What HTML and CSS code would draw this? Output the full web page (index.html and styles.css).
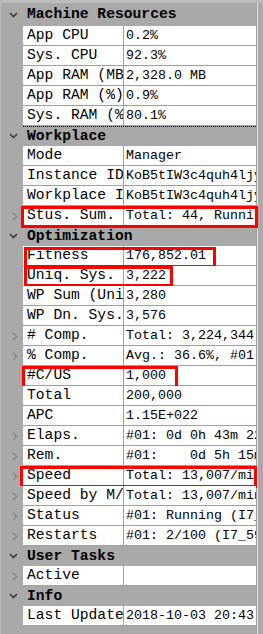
FILE: index.html
```html
<!DOCTYPE html>
<html>
<head>
<meta charset="utf-8">
<link rel="stylesheet" href="styles.css">
</head>
<body>
<div class="frame">
  <div class="tree">
    <div class="ghead first">
      <span class="tw"><svg class="chev-down" width="9" height="6" viewBox="0 0 9 6"><polyline points="1,1 4.5,4.5 8,1"/></svg></span>
      <span class="gtitle">Machine Resources</span>
    </div>
    <div class="row"><span class="tw"></span><span class="k">App CPU</span><span class="v">0.2%</span></div>
    <div class="row"><span class="tw"></span><span class="k">Sys. CPU</span><span class="v">92.3%</span></div>
    <div class="row"><span class="tw"></span><span class="k">App RAM (MB)</span><span class="v">2,328.0 MB</span></div>
    <div class="row"><span class="tw"></span><span class="k">App RAM (%)</span><span class="v">0.9%</span></div>
    <div class="row"><span class="tw"></span><span class="k">Sys. RAM (%)</span><span class="v">80.1%</span></div>

    <div class="ghead focus">
      <span class="tw"><svg class="chev-down" width="9" height="6" viewBox="0 0 9 6"><polyline points="1,1 4.5,4.5 8,1"/></svg></span>
      <span class="gtitle">Workplace</span>
    </div>
    <div class="row"><span class="tw"></span><span class="k">Mode</span><span class="v">Manager</span></div>
    <div class="row"><span class="tw"></span><span class="k">Instance ID</span><span class="v">KoB5tIW3c4quh4ljyQ</span></div>
    <div class="row"><span class="tw"></span><span class="k">Workplace ID</span><span class="v">KoB5tIW3c4quh4ljyQ</span></div>
    <div class="row"><span class="tw"><svg class="chev-right" width="6" height="9" viewBox="0 0 6 9"><polyline points="1,1 4.5,4.5 1,8"/></svg></span><span class="k">Stus. Sum.</span><span class="v">Total: 44, Running: 1</span><i class="box box-stus"></i></div>

    <div class="ghead">
      <span class="tw"><svg class="chev-down" width="9" height="6" viewBox="0 0 9 6"><polyline points="1,1 4.5,4.5 8,1"/></svg></span>
      <span class="gtitle">Optimization</span>
    </div>
    <div class="row"><span class="tw"></span><span class="k">Fitness</span><span class="v">176,852.01</span><i class="box box-fit"></i></div>
    <div class="row"><span class="tw"></span><span class="k">Uniq. Sys.</span><span class="v">3,222</span><i class="box box-uniq"></i></div>
    <div class="row"><span class="tw"></span><span class="k">WP Sum (Uniq.)</span><span class="v">3,280</span></div>
    <div class="row"><span class="tw"></span><span class="k">WP Dn. Sys.</span><span class="v">3,576</span></div>
    <div class="row"><span class="tw"><svg class="chev-right" width="6" height="9" viewBox="0 0 6 9"><polyline points="1,1 4.5,4.5 1,8"/></svg></span><span class="k"># Comp.</span><span class="v">Total: 3,224,344, #01</span></div>
    <div class="row"><span class="tw"><svg class="chev-right" width="6" height="9" viewBox="0 0 6 9"><polyline points="1,1 4.5,4.5 1,8"/></svg></span><span class="k">% Comp.</span><span class="v">Avg.: 36.6%, #01: 36</span></div>
    <div class="row"><span class="tw"></span><span class="k">#C/US</span><span class="v">1,000</span><i class="box box-cus"></i></div>
    <div class="row"><span class="tw"></span><span class="k">Total</span><span class="v">200,000</span></div>
    <div class="row"><span class="tw"></span><span class="k">APC</span><span class="v">1.15E+022</span></div>
    <div class="row"><span class="tw"><svg class="chev-right" width="6" height="9" viewBox="0 0 6 9"><polyline points="1,1 4.5,4.5 1,8"/></svg></span><span class="k">Elaps.</span><span class="v">#01: 0d 0h 43m 22s</span></div>
    <div class="row"><span class="tw"><svg class="chev-right" width="6" height="9" viewBox="0 0 6 9"><polyline points="1,1 4.5,4.5 1,8"/></svg></span><span class="k">Rem.</span><span class="v">#01:    0d 5h 15m</span></div>
    <div class="row"><span class="tw"><svg class="chev-right" width="6" height="9" viewBox="0 0 6 9"><polyline points="1,1 4.5,4.5 1,8"/></svg></span><span class="k">Speed</span><span class="v">Total: 13,007/min</span><i class="box box-speed"></i></div>
    <div class="row"><span class="tw"><svg class="chev-right" width="6" height="9" viewBox="0 0 6 9"><polyline points="1,1 4.5,4.5 1,8"/></svg></span><span class="k">Speed by M/C</span><span class="v">Total: 13,007/min</span></div>
    <div class="row"><span class="tw"><svg class="chev-right" width="6" height="9" viewBox="0 0 6 9"><polyline points="1,1 4.5,4.5 1,8"/></svg></span><span class="k">Status</span><span class="v">#01: Running (I7_5960X)</span></div>
    <div class="row"><span class="tw"><svg class="chev-right" width="6" height="9" viewBox="0 0 6 9"><polyline points="1,1 4.5,4.5 1,8"/></svg></span><span class="k">Restarts</span><span class="v">#01: 2/100 (I7_5960X)</span></div>

    <div class="ghead">
      <span class="tw"><svg class="chev-down" width="9" height="6" viewBox="0 0 9 6"><polyline points="1,1 4.5,4.5 8,1"/></svg></span>
      <span class="gtitle">User Tasks</span>
    </div>
    <div class="row"><span class="tw"><svg class="chev-right" width="6" height="9" viewBox="0 0 6 9"><polyline points="1,1 4.5,4.5 1,8"/></svg></span><span class="k">Active</span><span class="v"></span></div>

    <div class="ghead">
      <span class="tw"><svg class="chev-down" width="9" height="6" viewBox="0 0 9 6"><polyline points="1,1 4.5,4.5 8,1"/></svg></span>
      <span class="gtitle">Info</span>
    </div>
    <div class="row"><span class="tw"></span><span class="k">Last Update</span><span class="v">2018-10-03 20:43:51</span></div>
  </div>
  <div class="edge"></div>
</div>
</body>
</html>
```
FILE: styles.css
```css
html, body {
  margin: 0;
  padding: 0;
}
body {
  width: 263px;
  height: 634px;
  background: #f0f0f0;
  overflow: hidden;
}
.frame {
  display: flex;
  height: 634px;
  background: #a9a9a9;
  border-top: 3px solid #bcbcbc;
  border-left: 1px solid #bcbcbc;
  box-sizing: border-box;
}
.tree {
  width: 255px;
  display: flex;
  flex-direction: column;
  border-right: 1px solid #9a9a9a;
}
.edge {
  width: 6px;
  border-left: 1px solid #e8e8e8;
  background: #a9a9a9;
}
.ghead, .row {
  display: flex;
  height: 20px;
  flex: none;
}
.ghead.first {
  height: 23px;
}
.tw {
  width: 22px;
  flex: none;
  display: flex;
  align-items: center;
  justify-content: center;
  background: #a9a9a9;
}
.chev-down polyline {
  fill: none;
  stroke: #3c3c3c;
  stroke-width: 1.6;
}
.chev-right polyline {
  fill: none;
  stroke: #8a8a8a;
  stroke-width: 1.5;
}
.chev-down { margin-left: 3px; }
.chev-right { margin-left: 5px; }
.gtitle {
  flex: 1;
  padding-left: 4px;
  font-family: "Liberation Mono", "Courier New", monospace;
  font-weight: bold;
  font-size: 14.67px;
  line-height: 20px;
  color: #000;
  background: #a9a9a9;
  white-space: nowrap;
  overflow: hidden;
}
.first .gtitle {
  line-height: 23px;
}
.focus .gtitle {
  background: repeating-linear-gradient(90deg, #000 0 1px, transparent 1px 2px) top left / 100% 1px no-repeat, #a9a9a9;
}
.row {
  position: relative;
}
.k, .v {
  background: #fff;
  border-bottom: 1px solid #a0a0a0;
  height: 19px;
  line-height: 19px;
  white-space: nowrap;
  overflow: hidden;
  color: #000;
  font-family: "Liberation Mono", "Courier New", monospace;
}
.k {
  width: 96px;
  flex: none;
  padding-left: 4px;
  border-right: 1px solid #a0a0a0;
  font-size: 14.67px;
}
.v {
  flex: 1;
  padding-left: 2px;
  font-size: 13.33px;
  white-space: pre;
}
.box {
  position: absolute;
  border: 3px solid #f00;
  box-sizing: border-box;
  pointer-events: none;
}
.box-stus { left: 20px; top: 0; width: 237px; height: 22px; }
.box-fit { left: 23px; top: 1px; width: 192px; height: 21px; }
.box-uniq { left: 23px; top: 0; width: 149px; height: 21px; }
.box-cus { left: 21px; top: 0; width: 156px; height: 24px; }
.box-speed { left: 19px; top: 0; width: 237px; height: 22px; }
```
